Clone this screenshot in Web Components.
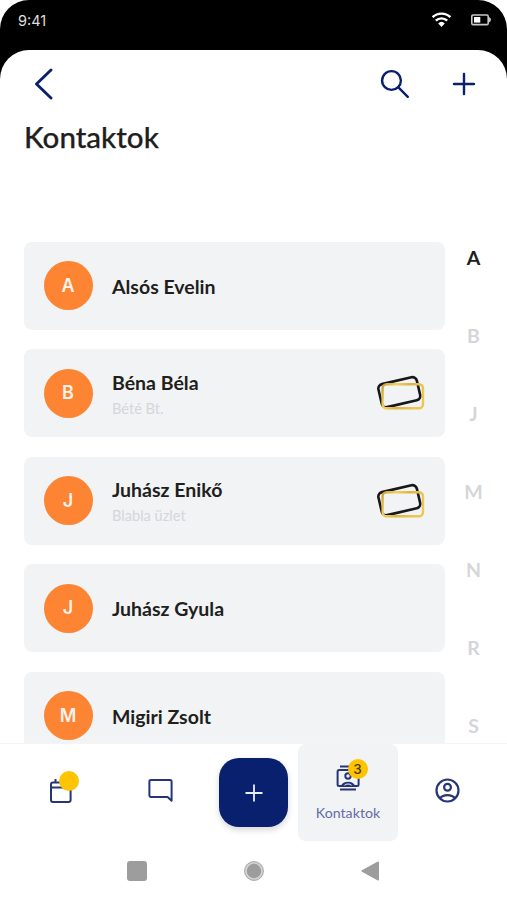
<!DOCTYPE html>
<html lang="hu">
<head>
<meta charset="utf-8">
<title>Kontaktok</title>
<style>
  :root {
    --navy: #08206e;
    --orange: #fc8433;
    --yellow: #ffc400;
    --surface: #f1f3f5;
    --ink: #211e1c;
    --muted: #d5d6d9;
  }
  body {
    margin: 0;
    font-family: Lato, "Open Sans", sans-serif;
    color: var(--ink);
    background: #fff;
  }
</style>
</head>
<body>
<contacts-app></contacts-app>

<script>
// every element clones its own template into an open shadow root
function define(name, html, setup) {
  const template = document.createElement("template");
  template.innerHTML = html;

  customElements.define(name, class extends HTMLElement {
    constructor() {
      super();
      this.attachShadow({ mode: "open" });
      this.shadowRoot.appendChild(template.content.cloneNode(true));
    }

    connectedCallback() {
      if (setup) setup(this, this.shadowRoot);
    }
  });
}

define("status-bar", `
  <style>
    :host {
      display: flex;
      box-sizing: border-box;
      height: 50px;
      padding: 11px 16px 0 18px;
      color: #dedede;
      font: 14.5px/19px Inter, sans-serif;
    }
    .time { flex: 1; }
    svg { display: block; }
    .wifi { margin: 1px 19px 0 0; }
    .battery { margin-top: 3px; }
  </style>
  <span class="time">9:41</span>
  <svg class="wifi" width="21" height="16" viewBox="0 0 21 16" fill="none" stroke="#fff" stroke-width="2.4">
    <path d="M1.6 5.2a12.8 12.8 0 0 1 17.8 0"/>
    <path d="M4.8 8.7a8.2 8.2 0 0 1 11.4 0"/>
    <path d="M7.2 11.4a4.8 4.8 0 0 1 6.6 0L10.5 15Z" fill="#fff" stroke="none"/>
  </svg>
  <svg class="battery" width="20" height="12" viewBox="0 0 20 12">
    <rect x=".8" y="1" width="16.4" height="9.6" rx="1.4" fill="none" stroke="#c8c8c8" stroke-width="1.6"/>
    <rect x="3" y="3" width="6.3" height="5.6" fill="#fff"/>
    <path d="M18 3.2c2.6.4 2.6 4.6 0 5Z" fill="#c8c8c8"/>
  </svg>
`);

define("page-header", `
  <style>
    :host { display: block; height: 191px; }
    .actions {
      display: flex;
      align-items: center;
      height: 68px;
      padding: 0 31px 0 34px;
    }
    .gap { flex: 1; }
    svg {
      display: block;
      fill: none;
      stroke: var(--navy);
      stroke-width: 2.4;
      stroke-linecap: round;
    }
    .back { stroke-width: 2.9; }
    .search { margin-right: 42px; }
    h1 {
      margin: 1px 0 0 24px;
      font-size: 29.5px;
      font-weight: 500;
      line-height: 36px;
      -webkit-text-stroke: .25px currentColor;
    }
  </style>
  <div class="actions">
    <svg class="back" width="19" height="32" viewBox="0 0 19 32" stroke-linejoin="round"><path d="M17 2 2.5 16 17 30"/></svg>
    <span class="gap"></span>
    <svg class="search" width="30" height="30" viewBox="0 0 30 30"><circle cx="11.5" cy="11.5" r="9.4"/><path d="m18.4 18.4 9.4 9.4"/></svg>
    <svg width="24" height="24" viewBox="0 0 24 24"><path d="M12 2v20M2 12h20"/></svg>
  </div>
  <h1><slot></slot></h1>
`);

define("contact-avatar", `
  <style>
    :host {
      display: grid;
      place-items: center;
      flex: none;
      width: 49px;
      height: 49px;
      border-radius: 50%;
      background: var(--orange);
      color: #fff3ea;
      font: 600 18px/1 Inter, sans-serif;
    }
  </style>
  <span><slot></slot></span>
`);

define("contact-card", `
  <style>
    :host {
      display: flex;
      align-items: center;
      flex: none;
      box-sizing: border-box;
      height: 88px;
      padding: 0 20px 0 19.5px;
      border-radius: 8px;
      background: var(--surface);
    }
    .info { flex: 1; padding: 2px 0 0 19.5px; }
    :host([company]) .info { padding-top: 5px; }
    .name { font-size: 19.5px; font-weight: 700; line-height: 26px; }
    .company { color: var(--muted); font-size: 14.6px; line-height: 26px; }
    .company, .cards { display: none; }
    :host([company]) .company, :host([company]) .cards { display: block; }
    .cards { fill: none; }
  </style>
  <contact-avatar></contact-avatar>
  <div class="info">
    <div class="name"><slot></slot></div>
    <div class="company"></div>
  </div>
  <svg class="cards" width="48" height="36" viewBox="0 0 48 36">
    <defs>
      <linearGradient id="gold" x2="1" y2=".35">
        <stop stop-color="#c99d33"/>
        <stop offset=".3" stop-color="#f2d25c"/>
        <stop offset=".6" stop-color="#dfb341"/>
        <stop offset="1" stop-color="#efc64d"/>
      </linearGradient>
    </defs>
    <rect x="2.6" y="5.4" width="39.4" height="23.6" rx="4.5" transform="rotate(-13 22.3 17.2)" stroke="#17171c" stroke-width="2.6"/>
    <rect x="5.6" y="9.2" width="40.4" height="24" rx="4" stroke="url(#gold)" stroke-width="2.4"/>
  </svg>
`, (host, root) => {
  root.querySelector("contact-avatar").textContent = host.textContent.trim()[0];
  root.querySelector(".company").textContent = host.getAttribute("company") || "";
});

define("letter-index", `
  <style>
    :host {
      display: flex;
      flex-direction: column;
      align-items: center;
      gap: 54px;
      padding-top: 4.5px;
      color: var(--muted);
      font-size: 19.5px;
      font-weight: 700;
      line-height: 24px;
    }
    .active { color: var(--ink); }
  </style>
`, (host, root) => {
  const active = host.getAttribute("active");
  for (const letter of host.getAttribute("letters")) {
    const item = document.createElement("span");
    item.textContent = letter;
    if (letter === active) item.className = "active";
    root.appendChild(item);
  }
});

define("nav-badge", `
  <style>
    :host {
      position: absolute;
      top: var(--badge-top, -8px);
      right: var(--badge-right, -8px);
      display: grid;
      place-items: center;
      width: 20px;
      height: 20px;
      border-radius: 50%;
      background: var(--yellow);
      color: #493b0c;
      font: 500 13.5px/20px Inter, sans-serif;
    }
  </style>
  <slot></slot>
`);

define("bottom-nav", `
  <style>
    :host {
      display: grid;
      grid-template-columns: 120px 80px 98px 100px 99px;
      justify-content: start;
      flex: none;
      height: 97px;
      background: #fff;
      box-shadow: 0 -1px 1px #f3f4f6;
      position: relative;
    }
    .item {
      display: flex;
      flex-direction: column;
      align-items: center;
      padding-top: 34px;
    }
    .icon { position: relative; width: 24px; height: 25px; }
    svg { display: block; fill: none; stroke: #263478; stroke-width: 2; }
    .calendar { --badge-top: -7px; --badge-right: -7px; }
    .fab {
      display: grid;
      place-items: center;
      width: 69px;
      height: 69px;
      border-radius: 20px;
      background: var(--navy);
      box-shadow: 0 3px 6px rgba(0, 0, 0, .16);
    }
    .fab svg { stroke: #e9edfa; stroke-width: 1.8; }
    .add { padding: 14px 0 0 9px; }
    .active {
      padding-top: 21px;
      border-radius: 8px;
      background: var(--surface);
      --badge-top: -6.5px;
      --badge-right: -7.5px;
    }
    .label { margin-top: 13px; color: #656da5; font-size: 14.2px; line-height: 20px; }
    .profile svg { stroke-width: 2.2; }
  </style>
  <div class="item calendar">
    <div class="icon">
      <svg width="24" height="25" viewBox="0 0 24 25">
        <rect x="3" y="4.5" width="19.6" height="19.5" rx="2"/><path d="M3 9.5h19.5M7.5 1v3.5"/>
      </svg>
      <nav-badge></nav-badge>
    </div>
  </div>
  <div class="item">
    <svg width="25" height="25" viewBox="0 0 25 25" stroke-linejoin="round">
      <path d="M3 1.9h19c1 0 1.6.6 1.6 1.6v19.2l-4-3.8H3c-1 0-1.6-.6-1.6-1.6V3.5c0-1 .6-1.6 1.6-1.6Z"/>
    </svg>
  </div>
  <div class="item add">
    <div class="fab"><svg width="18" height="18" viewBox="0 0 18 18"><path d="M9 .5v17M.5 9h17"/></svg></div>
  </div>
  <div class="item active">
    <div class="icon">
      <svg width="24" height="26" viewBox="0 0 24 26">
        <path d="M4 1.5h16M4 24.500h16"/>
        <rect x="1.6" y="5" width="21" height="16" rx="1.5"/>
        <circle cx="12" cy="11" r="2.7"/>
        <path d="M5 21c1.5-5.600 12.5-5.600 14 0Z" fill="#263478" stroke="none"/>
        <path d="M8.5 20.2c2-1.6 5-1.6 7 0" stroke="#f1f3f5" stroke-width="1"/>
      </svg>
      <nav-badge>3</nav-badge>
    </div>
    <span class="label">Kontaktok</span>
  </div>
  <div class="item profile">
    <svg width="25" height="25" viewBox="0 0 25 25">
      <circle cx="12.5" cy="12.5" r="11"/><circle cx="12.5" cy="9.3" r="3.4"/>
      <path d="M5 20.2c3.2-4.2 11.8-4.2 15 0"/>
    </svg>
  </div>
`);

define("system-bar", `
  <style>
    :host {
      display: flex;
      align-items: center;
      justify-content: space-between;
      flex: none;
      height: 59px;
      padding: 0 127px 0 126.5px;
    }
    svg { display: block; }
  </style>
  <svg width="20" height="20"><rect width="20" height="20" rx="3" fill="#9d9d9d"/></svg>
  <svg width="20" height="20"><circle cx="10" cy="10" r="9.4" fill="#d2d2d2" stroke="#a5a5a5"/><circle cx="10" cy="10" r="7.2" fill="#9d9d9d"/></svg>
  <svg width="19" height="20"><path d="M17.2 1.3v17.4L1.3 10Z" fill="#9d9d9d" stroke="#9d9d9d" stroke-width="1.6" stroke-linejoin="round"/></svg>
`);

define("contacts-app", `
  <style>
    :host {
      display: block;
      height: 900px;
      overflow: hidden;
      border-radius: 29px 29px 0 0;
      background: #000;
    }
    .screen {
      display: flex;
      flex-direction: column;
      height: 850px;
      border-radius: 29px 29px 0 0;
      background: #fff;
      overflow: hidden;
    }
    page-header { flex: none; }
    main {
      display: grid;
      grid-template-columns: 420.5px 58px;
      flex: 1;
      min-height: 0;
      padding-left: 24px;
      overflow: hidden;
    }
    .list { display: flex; flex-direction: column; gap: 19.5px; padding-top: .6px; }
  </style>
  <status-bar></status-bar>
  <div class="screen">
    <page-header>Kontaktok</page-header>
    <main>
      <div class="list">
        <contact-card>Alsós Evelin</contact-card>
        <contact-card company="Bété Bt.">Béna Béla</contact-card>
        <contact-card company="Blabla üzlet">Juhász Enikő</contact-card>
        <contact-card>Juhász Gyula</contact-card>
        <contact-card>Migiri Zsolt</contact-card>
      </div>
      <letter-index letters="ABJMNRS" active="A"></letter-index>
    </main>
    <bottom-nav></bottom-nav>
    <system-bar></system-bar>
  </div>
`);
</script>
</body>
</html>
